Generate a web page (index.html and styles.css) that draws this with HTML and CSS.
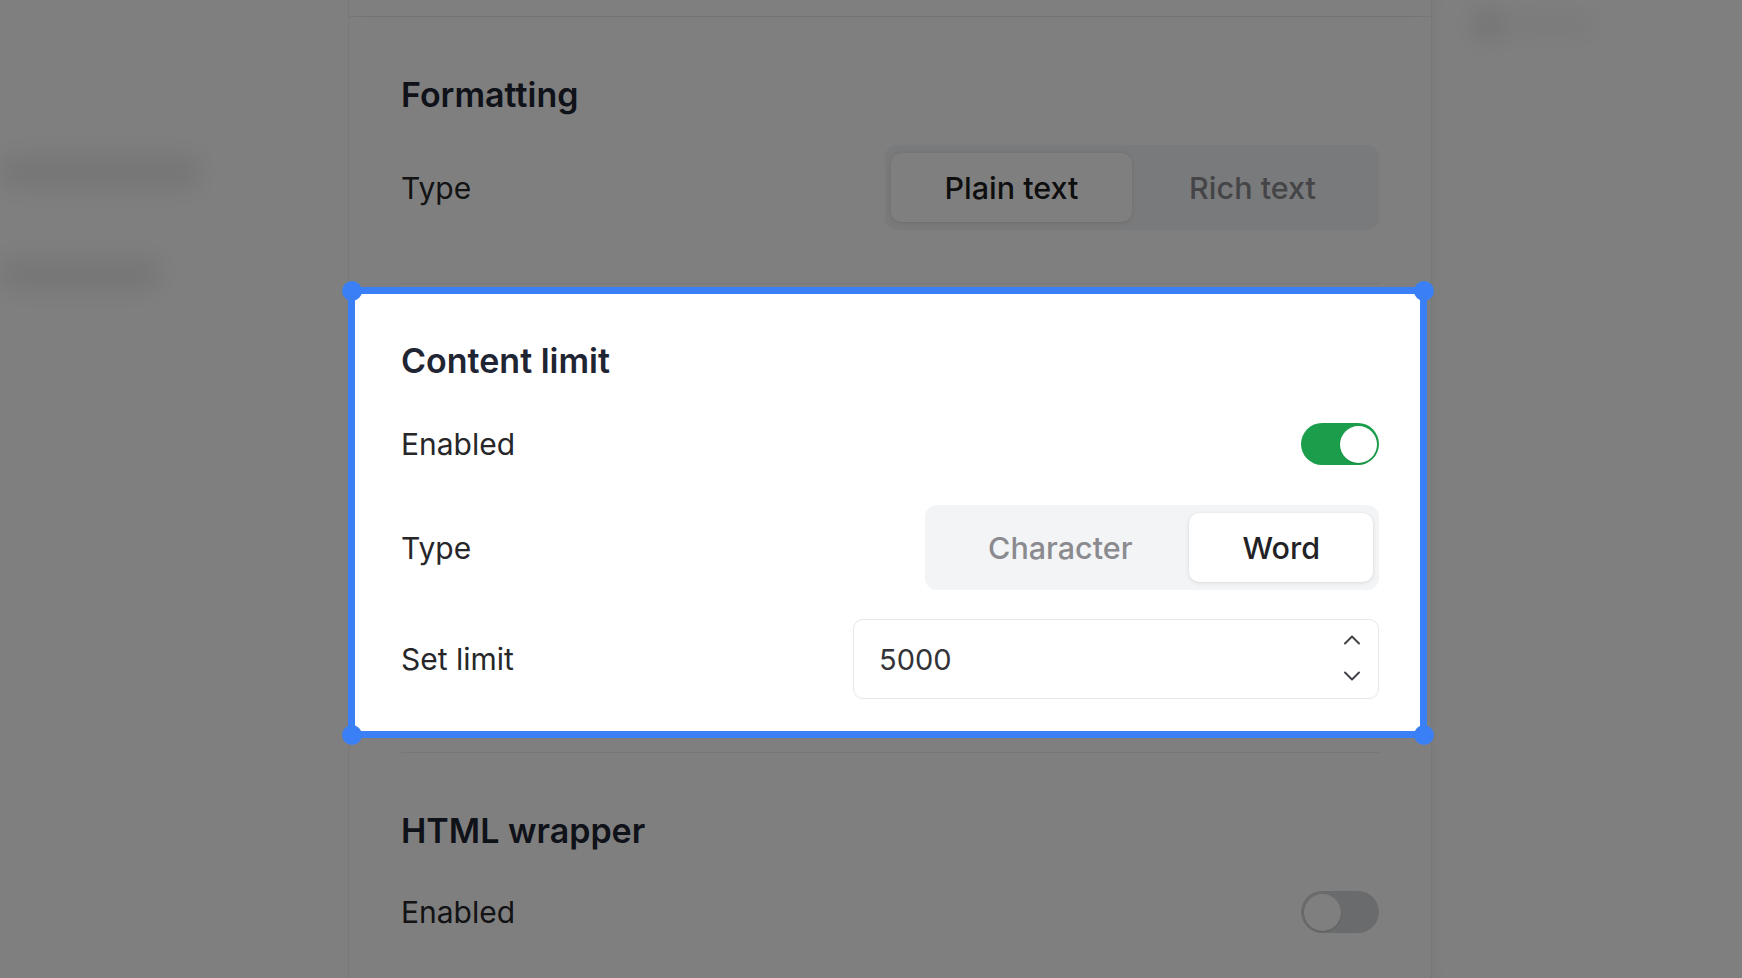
FILE: index.html
```html
<!DOCTYPE html>
<html lang="en">
<head>
<meta charset="utf-8">
<title>Field settings</title>
<link rel="stylesheet" href="styles.css">
</head>
<body>
<div class="app">
  <aside class="sidebar">
    <div class="blur-line line-a"></div>
    <div class="blur-line line-b"></div>
  </aside>

  <main class="panel">
    <div class="panel-header"></div>

    <section class="section section-formatting">
      <h2 class="section-title">Formatting</h2>
      <div class="row row-format-type">
        <span class="label">Type</span>
        <div class="segmented segmented-equal">
          <button class="seg-btn active">Plain text</button>
          <button class="seg-btn">Rich text</button>
        </div>
      </div>
    </section>

    <hr class="divider">

    <section class="section section-selected">
      <span class="handle h-tl"></span>
      <span class="handle h-tr"></span>
      <span class="handle h-bl"></span>
      <span class="handle h-br"></span>
      <h2 class="section-title">Content limit</h2>
      <div class="row row-enabled">
        <span class="label">Enabled</span>
        <span class="toggle on"><span class="knob"></span></span>
      </div>
      <div class="row row-limit-type">
        <span class="label">Type</span>
        <div class="segmented segmented-auto">
          <button class="seg-btn seg-character">Character</button>
          <button class="seg-btn seg-word active">Word</button>
        </div>
      </div>
      <div class="row row-set-limit">
        <span class="label">Set limit</span>
        <div class="number-input">
          <span class="number-value">5000</span>
          <span class="stepper">
            <svg class="chev" width="18" height="10" viewBox="0 0 18 10"><polyline points="2,8.5 9,1.5 16,8.5" fill="none" stroke="#3f3f46" stroke-width="1.9" stroke-linecap="round" stroke-linejoin="round"/></svg>
            <svg class="chev" width="18" height="10" viewBox="0 0 18 10"><polyline points="2,1.5 9,8.5 16,1.5" fill="none" stroke="#3f3f46" stroke-width="1.9" stroke-linecap="round" stroke-linejoin="round"/></svg>
          </span>
        </div>
      </div>
    </section>

    <hr class="divider divider-after">

    <section class="section section-html">
      <h2 class="section-title">HTML wrapper</h2>
      <div class="row row-html-enabled">
        <span class="label">Enabled</span>
        <span class="toggle"><span class="knob"></span></span>
      </div>
    </section>
  </main>

  <aside class="inspector">
    <div class="blur-dot"></div>
    <div class="blur-line line-c"></div>
  </aside>
</div>
<div class="overlay"></div>
</body>
</html>
```

FILE: styles.css
```css
* { box-sizing: border-box; }

html, body {
  margin: 0;
  padding: 0;
}

body {
  width: 1742px;
  height: 978px;
  overflow: hidden;
  background: #ffffff;
  font-family: Inter, "Noto Sans", "Liberation Sans", sans-serif;
  color: #27272a;
}

.app {
  display: grid;
  grid-template-columns: 348px 1084px 1fr;
  height: 978px;
}

/* blurred surroundings */
.sidebar,
.inspector {
  background: #ffffff;
  filter: blur(12px);
  display: flex;
  flex-direction: column;
}

.blur-line {
  background: #ececec;
  height: 34px;
  border-radius: 8px;
}

.line-a { width: 200px; margin-top: 155px; }
.line-b { width: 160px; margin-top: 68px; }

.inspector { padding: 8px 0 0 40px; flex-direction: row; gap: 8px; align-items: flex-start; }
.blur-dot { width: 34px; height: 34px; border-radius: 50%; background: #e8e8e8; }
.line-c { width: 80px; height: 18px; margin-top: 8px; background: #f2f2f2; }

/* main panel */
.panel {
  border-left: 1px solid #e8e8e8;
  border-right: 1px solid #e4e4e4;
  box-shadow: 8px 0 16px rgba(0, 0, 0, 0.06);
  background: #ffffff;
}

.panel-header {
  height: 17px;
  border-bottom: 1px solid #e5e7eb;
}

.section {
  padding: 58px 52px 0;
}

.section-formatting {
  padding-bottom: 53px;
}

.section-title {
  margin: 0;
  font-size: 34px;
  line-height: 40px;
  font-weight: 600;
  color: #1f2532;
  letter-spacing: 0;
}

.row {
  display: flex;
  justify-content: space-between;
  align-items: center;
}

.label {
  font-size: 30px;
  line-height: 36px;
  font-weight: 400;
  color: #27272a;
}

.divider {
  margin: 0 52px;
  border: 0;
  border-top: 1px solid #eceef1;
  height: 0;
}

/* segmented controls */
.segmented {
  display: flex;
  background: #f3f4f6;
  border-radius: 12px;
  padding: 8px 6px;
}

.seg-btn {
  font-family: inherit;
  font-size: 30.5px;
  font-weight: 500;
  color: #8a8a8f;
  background: transparent;
  border: 0;
  border-radius: 10px;
  height: 69px;
  cursor: pointer;
}

.seg-btn.active {
  background: #ffffff;
  color: #222226;
  box-shadow: 0 1px 4px rgba(0, 0, 0, 0.10), 0 0 1px rgba(0, 0, 0, 0.08);
}

.row-format-type { margin-top: 30px; }

.segmented-equal {
  width: 494px;
  display: grid;
  grid-template-columns: 1fr 1fr;
}

.segmented-equal .seg-btn.active { color: #1d1d1f; }

.seg-character { padding: 0 57px; }
.seg-word { padding: 0 53px; }

/* selected section */
.section-selected {
  position: relative;
  z-index: 20;
  margin-top: 3px;
  margin-bottom: 14px;
  padding: 54px 52px 39px;
}

.section-selected::before {
  content: "";
  position: absolute;
  top: 0;
  bottom: 0;
  left: -1px;
  right: 4px;
  background: #ffffff;
  border: 7px solid #3b7ff6;
  z-index: -1;
}

.handle {
  position: absolute;
  width: 20px;
  height: 20px;
  border-radius: 50%;
  background: #3b7ff6;
}

.h-tl { top: -6.5px; left: -7.5px; }
.h-tr { top: -6.5px; right: -2.5px; }
.h-bl { bottom: -6.5px; left: -7.5px; }
.h-br { bottom: -6.5px; right: -2.5px; }

.row-enabled { margin-top: 42px; }
.row-limit-type { margin-top: 40px; }
.row-set-limit { margin-top: 29px; }

/* toggles */
.toggle {
  width: 78px;
  height: 42px;
  border-radius: 21px;
  background: #d4d6da;
  padding: 2.5px;
  display: flex;
  align-items: center;
}

.toggle .knob {
  width: 37px;
  height: 37px;
  border-radius: 50%;
  background: #ffffff;
  box-shadow: 0 1px 2px rgba(0, 0, 0, 0.12);
}

.toggle.on {
  background: #1b9e4b;
  justify-content: flex-end;
}

/* number input */
.number-input {
  width: 526px;
  height: 80px;
  border: 1px solid #e5e7eb;
  border-radius: 10px;
  display: flex;
  align-items: center;
  justify-content: space-between;
  padding: 0 17px 0 25px;
  background: #ffffff;
}

.number-value {
  font-size: 29px;
  color: #333338;
  font-weight: 400;
}

.stepper {
  display: flex;
  flex-direction: column;
  gap: 26px;
  margin-top: -3px;
}

.chev { display: block; }

/* html wrapper */
.row-html-enabled { margin-top: 40px; }

/* dim overlay */
.overlay {
  position: fixed;
  inset: 0;
  background: rgba(0, 0, 0, 0.5);
  z-index: 10;
}
```
